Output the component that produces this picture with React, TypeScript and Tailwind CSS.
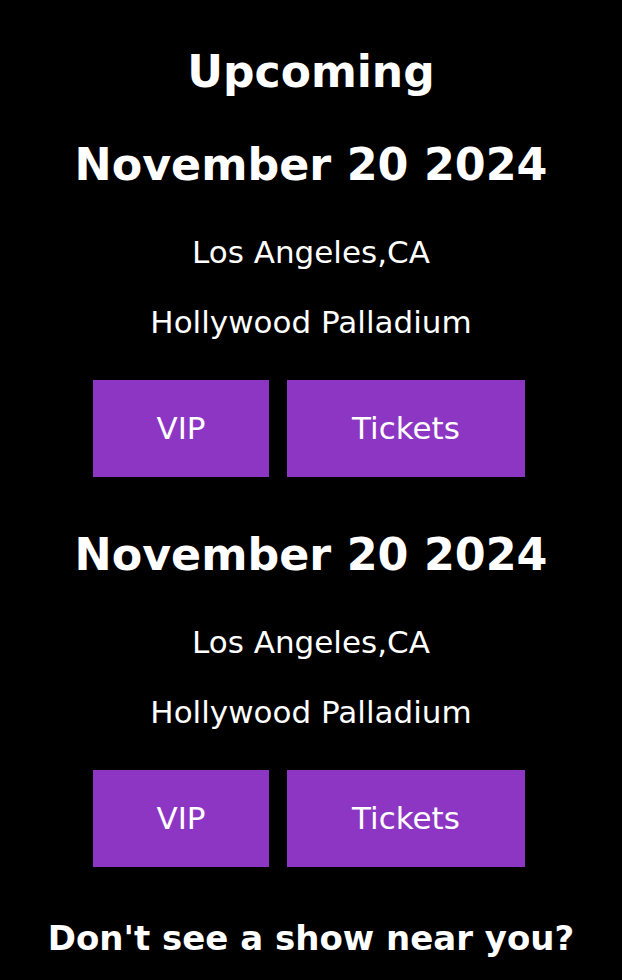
import React from "react";

const font = { fontFamily: '"DejaVu Sans", "Lucida Grande", sans-serif' };

function Show({ top }: { top: "first" | "second" }) {
  return (
    <div className="flex flex-col items-center">
      <h2
        className={
          (top === "first" ? "mt-[26px] " : "mt-[43px] ") +
          "h-[70px] leading-[70px] text-[44.4px] font-bold text-white whitespace-nowrap"
        }
      >
        November 20 2024
      </h2>
      <p className="mt-[32px] h-[40px] leading-[40px] text-[31px] text-white whitespace-nowrap">
        Los Angeles,CA
      </p>
      <p className="mt-[30px] h-[40px] leading-[40px] text-[31px] text-white whitespace-nowrap">
        Hollywood Palladium
      </p>
      <div className="mt-[38px] mr-[4px] flex gap-[18px]">
        <button className="w-[176px] h-[97px] bg-[#8d36c4] text-white text-[31px]">
          VIP
        </button>
        <button className="w-[238px] h-[97px] bg-[#8d36c4] text-white text-[31px]">
          Tickets
        </button>
      </div>
    </div>
  );
}

export default function App() {
  return (
    <div className="w-[622px] h-[980px] bg-black flex flex-col items-center pt-[40px]" style={font}>
      <h1 className="h-[64px] leading-[64px] text-[44px] font-bold text-white">Upcoming</h1>
      <Show top="first" />
      <Show top="second" />
      <p className="mt-[51px] h-[40px] leading-[40px] text-[34px] font-bold text-white whitespace-nowrap">
        Don't see a show near you?
      </p>
    </div>
  );
}
